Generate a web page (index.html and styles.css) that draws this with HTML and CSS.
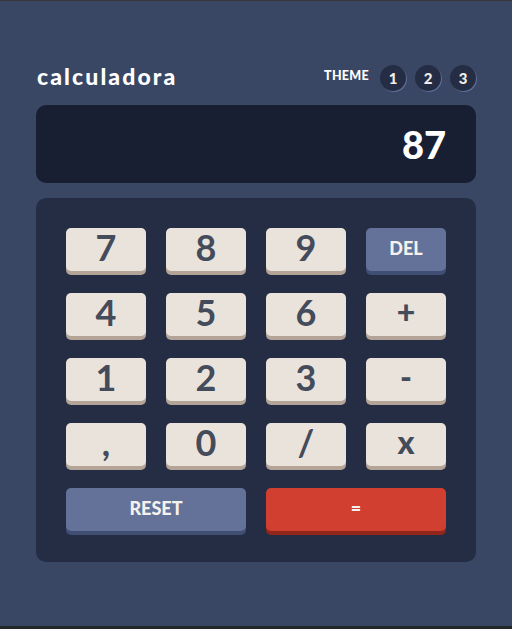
FILE: index.html
```html
<!DOCTYPE html>
<html lang="es">
<head>
<meta charset="utf-8">
<title>calculadora</title>
<link rel="stylesheet" href="styles.css">
</head>
<body>
<div class="page">
  <main class="calc">
    <header class="header">
      <h1 class="title">calculadora</h1>
      <div class="theme">
        <span class="theme-label">THEME</span>
        <div class="toggles">
          <span class="toggle">1</span>
          <span class="toggle">2</span>
          <span class="toggle">3</span>
        </div>
      </div>
    </header>
    <section class="display">87</section>
    <section class="keypad">
      <button class="key">7</button>
      <button class="key">8</button>
      <button class="key">9</button>
      <button class="key key-alt">DEL</button>
      <button class="key">4</button>
      <button class="key">5</button>
      <button class="key">6</button>
      <button class="key key-op">+</button>
      <button class="key">1</button>
      <button class="key">2</button>
      <button class="key">3</button>
      <button class="key key-op">-</button>
      <button class="key">,</button>
      <button class="key">0</button>
      <button class="key">/</button>
      <button class="key key-op">x</button>
      <button class="key key-alt key-wide">RESET</button>
      <button class="key key-eq key-wide">=</button>
    </section>
  </main>
</div>
</body>
</html>
```
FILE: styles.css
```css
* { box-sizing: border-box; }
html, body { margin: 0; padding: 0; }
body {
  background: #22282a;
  font-family: "Lato", "Open Sans", sans-serif;
}
.page {
  height: 629px;
  background: #3a4764;
  border-top: 1px solid #363636;
  border-bottom: 3px solid #22282a;
  padding: 64px 36px 0;
}
.calc { width: 440px; }
.header {
  display: flex;
  align-items: center;
  justify-content: space-between;
  height: 26px;
}
.title {
  margin: 0 0 0 1px;
  font-size: 23px;
  font-weight: 900;
  color: #fff;
  letter-spacing: 2.1px;
  line-height: 1;
  position: relative;
  top: -2px;
}
.theme {
  display: flex;
  align-items: center;
  gap: 11px;
}
.theme-label {
  font-size: 12.5px;
  font-weight: 900;
  color: #fff;
  letter-spacing: 0.3px;
  position: relative;
  top: -3px;
}
.toggles {
  display: flex;
  gap: 9px;
}
.toggle {
  width: 26px;
  height: 26px;
  border-radius: 50%;
  background: #242d44;
  box-shadow: 1px 1px 0 #5f6c95;
  color: #f3eee9;
  font-size: 15px;
  font-weight: 900;
  display: flex;
  align-items: center;
  justify-content: center;
}
.display {
  margin-top: 14px;
  height: 78px;
  background: #181f33;
  border-radius: 10px;
  color: #fff;
  font-size: 38px;
  font-weight: 900;
  display: flex;
  align-items: center;
  justify-content: flex-end;
  padding-right: 30px;
}
.keypad {
  margin-top: 15px;
  background: #242d44;
  border-radius: 10px;
  padding: 30px 30px 31px;
  display: grid;
  grid-template-columns: repeat(4, 80px);
  column-gap: 20px;
  row-gap: 22px;
}
.key {
  height: 43px;
  border: 0;
  border-radius: 5px;
  background: #eae3dc;
  box-shadow: 0 4px 0 #b3a497;
  color: #444b5a;
  font-family: "Lato", "Open Sans", sans-serif;
  font-size: 36px;
  font-weight: 700;
  line-height: 1;
  padding: 0 0 5px;
  display: flex;
  align-items: center;
  justify-content: center;
}
.key-op { font-size: 32px; font-weight: 900; }
.key-alt {
  background: #647198;
  box-shadow: 0 4px 0 #414e73;
  color: #f4f1ee;
  font-size: 18px;
  font-weight: 900;
  padding: 0 0 3px;
}
.key-eq {
  background: #d03f2f;
  box-shadow: 0 4px 0 #93261a;
  color: #f4f1ee;
  font-size: 18px;
  font-weight: 900;
  padding: 0 0 3px;
}
.key-wide { grid-column: span 2; }
```
